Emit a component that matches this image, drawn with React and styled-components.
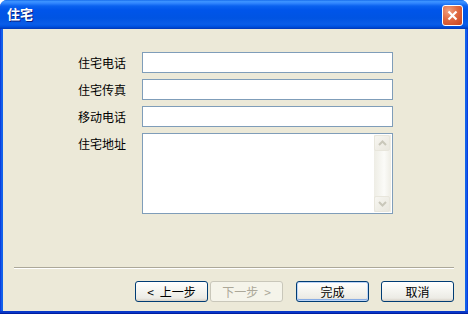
import React from 'react';
import styled, { createGlobalStyle } from 'styled-components';

const GlobalStyle = createGlobalStyle`
  html, body {
    margin: 0;
    padding: 0;
    background: #ffffff;
  }
  body {
    font-family: "Noto Sans CJK SC", "Liberation Sans", sans-serif;
    font-size: 12px;
  }
`;

const Window = styled.div`
  width: 468px;
  height: 314px;
  box-sizing: border-box;
  display: flex;
  flex-direction: column;
  border-radius: 7px 7px 0 0;
  overflow: hidden;
  background: linear-gradient(to right, #0831d9 0, #166aee 2px, #0a5ae8 3px, #0a5ae8 465px, #166aee 466px, #0831d9 468px);
  padding: 0 3px 3px;
  box-shadow: inset 0 -1px 0 #001ea0, inset 0 -3px 0 #0838c8;
`;

const TitleBar = styled.div`
  height: 29px;
  margin: 0 -3px;
  flex-shrink: 0;
  display: flex;
  align-items: center;
  justify-content: space-between;
  padding: 0 5px 0 7px;
  background: linear-gradient(to bottom,
    #0a5fe6 0px, #3d95ff 1px, #3388ff 3px, #0a62ef 6px, #0055ea 10px,
    #0054e3 18px, #0a5de8 24px, #0055e5 26px, #0042c8 28px, #0037b8 29px);
`;

const Title = styled.span`
  color: #ffffff;
  font-weight: bold;
  font-size: 13px;
  line-height: 1;
  text-shadow: 1px 1px 0 #0a1e80;
  margin-top: -2px;
`;

const CloseButton = styled.button`
  width: 21px;
  height: 21px;
  padding: 0;
  margin-top: 2px;
  border: 1px solid #ffffff;
  border-radius: 3px;
  background: radial-gradient(circle at 30% 25%, #f0a080 0%, #e06a42 45%, #c8421c 100%);
  display: flex;
  align-items: center;
  justify-content: center;
`;

const Body = styled.div`
  flex: 1;
  background: #ece9d8;
  display: flex;
  flex-direction: column;
`;

const Form = styled.div`
  flex: 1;
  display: grid;
  grid-template-columns: 118px 251px;
  column-gap: 16px;
  row-gap: 6px;
  align-content: start;
  padding: 23px 0 0 5px;
`;

const Label = styled.label`
  text-align: right;
  color: #000000;
  line-height: 21px;
  height: 21px;
  align-self: start;
`;

const Input = styled.div`
  height: 21px;
  box-sizing: border-box;
  border: 1px solid #7f9db9;
  background: #ffffff;
`;

const TextArea = styled.div`
  height: 81px;
  box-sizing: border-box;
  border: 1px solid #7f9db9;
  background: #ffffff;
  display: flex;
  justify-content: flex-end;
  padding: 1px;
`;

const ScrollBar = styled.div`
  width: 17px;
  display: flex;
  flex-direction: column;
  justify-content: space-between;
  background: linear-gradient(to right, #eeede5, #fbfbf8 60%, #eeede5);
`;

const ScrollArrow = styled.div`
  width: 16px;
  height: 16px;
  box-sizing: border-box;
  border: 1px solid #e8e6dc;
  border-radius: 2px;
  background: linear-gradient(to bottom right, #f7f6f1, #e9e7de);
  display: flex;
  align-items: center;
  justify-content: center;
`;

const Footer = styled.div`
  padding: 0 11px 9px;
`;

const Separator = styled.div`
  height: 0;
  border-top: 1px solid #aca899;
  border-bottom: 1px solid #ffffff;
`;

const ButtonRow = styled.div`
  display: flex;
  justify-content: flex-end;
  margin-top: 12px;
`;

const Button = styled.button`
  width: 73px;
  height: 21px;
  margin-left: ${p => p.$gap}px;
  padding: 0;
  box-sizing: border-box;
  font-family: "Noto Sans CJK SC", "Liberation Sans", sans-serif;
  font-size: 12px;
  line-height: 1;
  border-radius: 3px;
  border: 1px solid ${p => (p.disabled ? '#c9c7ba' : '#003c74')};
  color: ${p => (p.disabled ? '#aca899' : '#000000')};
  background: ${p => (p.disabled
    ? '#f5f4ea'
    : 'linear-gradient(to bottom, #ffffff 0%, #f6f6f2 40%, #ecebe5 85%, #d6d0c5 100%)')};
  box-shadow: ${p => (p.$default
    ? 'inset 0 0 0 1px #bcd4f6, inset 0 -1px 0 1px #89ade4'
    : 'none')};
  display: flex;
  align-items: center;
  justify-content: center;
  gap: 6px;
`;

const Chevron = ({ up }) => (
  <svg width="9" height="6" viewBox="0 0 9 6">
    <path
      d={up ? 'M1 5 L4.5 1.5 L8 5' : 'M1 1 L4.5 4.5 L8 1'}
      fill="none"
      stroke="#c9c7ba"
      strokeWidth="2"
    />
  </svg>
);

const fields = ['住宅电话', '住宅传真', '移动电话'];

export default function App() {
  return (
    <>
      <GlobalStyle />
      <Window>
        <TitleBar>
          <Title>住宅</Title>
          <CloseButton>
            <svg width="13" height="13" viewBox="0 0 13 13">
              <path d="M2.5 2.5 L10.5 10.5 M10.5 2.5 L2.5 10.5" stroke="#ffffff" strokeWidth="2.2" />
            </svg>
          </CloseButton>
        </TitleBar>
        <Body>
          <Form>
            {fields.map(f => (
              <React.Fragment key={f}>
                <Label>{f}</Label>
                <Input />
              </React.Fragment>
            ))}
            <Label>住宅地址</Label>
            <TextArea>
              <ScrollBar>
                <ScrollArrow><Chevron up /></ScrollArrow>
                <ScrollArrow><Chevron /></ScrollArrow>
              </ScrollBar>
            </TextArea>
          </Form>
          <Footer>
            <Separator />
            <ButtonRow>
              <Button $gap={0}>
                <span>&lt;</span><span>上一步</span>
              </Button>
              <Button $gap={2} disabled>
                <span>下一步</span><span>&gt;</span>
              </Button>
              <Button $gap={13} $default>完成</Button>
              <Button $gap={12}>取消</Button>
            </ButtonRow>
          </Footer>
        </Body>
      </Window>
    </>
  );
}
